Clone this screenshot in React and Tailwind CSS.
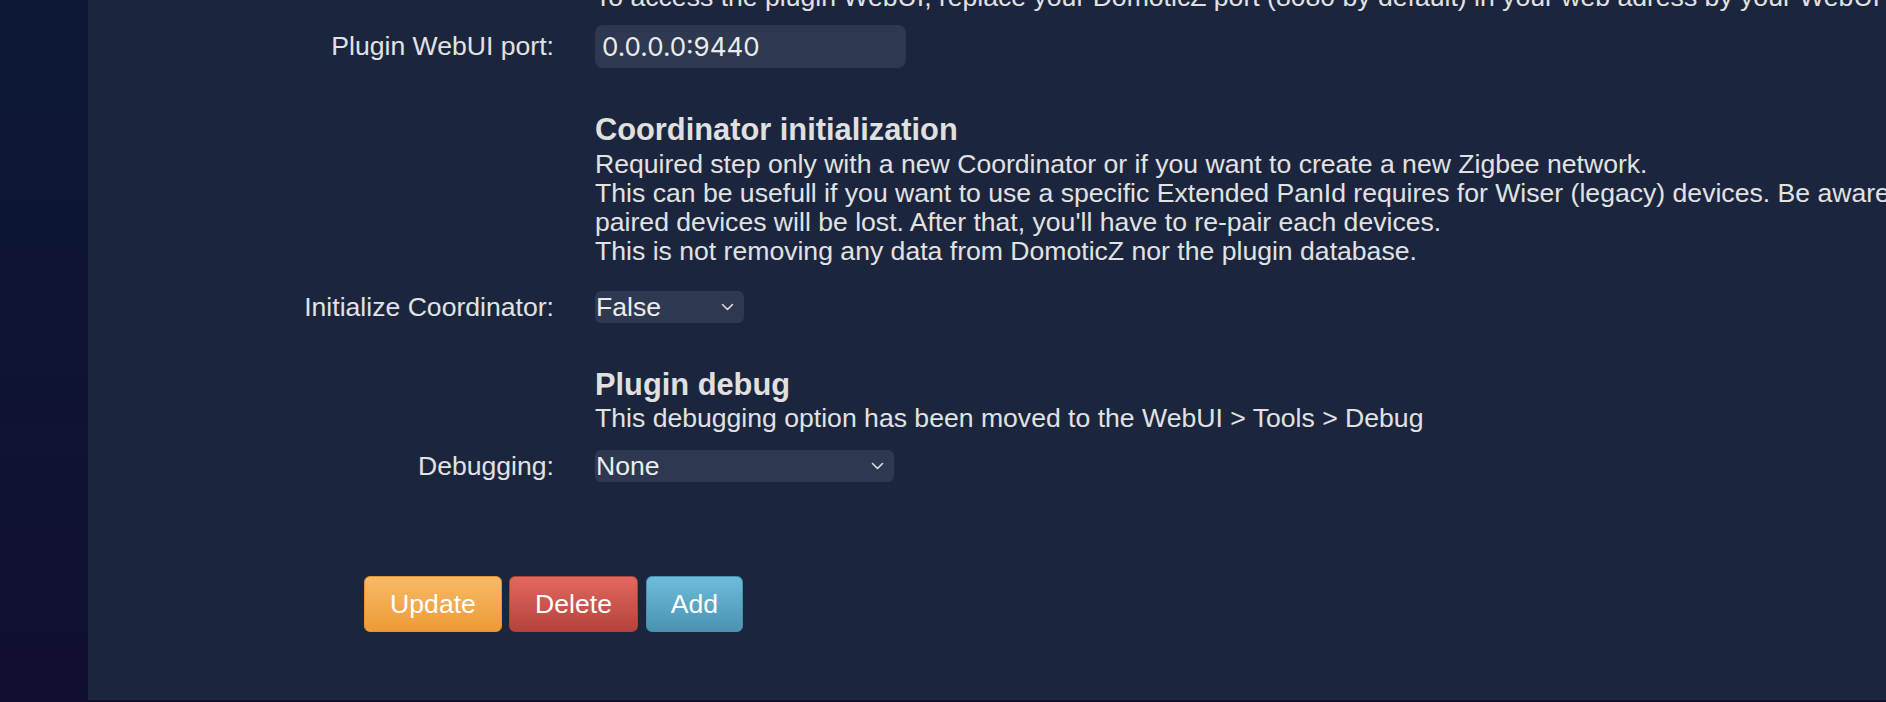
import React from "react";

function Chevron() {
  return (
    <svg width="13" height="8" viewBox="0 0 13 8" fill="none" className="shrink-0">
      <path d="M1.5 1.5 L6.5 6.5 L11.5 1.5" stroke="#dcdcdc" strokeWidth="1.6" strokeLinecap="round" strokeLinejoin="round" />
    </svg>
  );
}

function Row({ label, children, className = "" }) {
  return (
    <div className={"flex items-center " + className}>
      <div className="w-[466px] shrink-0 text-right whitespace-nowrap">{label}</div>
      <div className="ml-[41px] flex-1 min-w-0">{children}</div>
    </div>
  );
}

function Select({ value, width }) {
  return (
    <div
      className={
        "flex h-[32px] items-center justify-between rounded-[6px] bg-[#2e3951] pl-[1px] pr-[10px] text-[#ececec] " +
        width
      }
    >
      <span>{value}</span>
      <Chevron />
    </div>
  );
}

export default function App() {
  return (
    <div className="flex h-[702px] w-[1886px] overflow-hidden bg-gradient-to-b from-[#0b1836] to-[#110f30] font-['Liberation_Sans',Arial,sans-serif] text-[26.6px] leading-[29px] text-[#e2e2e2]">
      <div className="w-[88px] shrink-0" />
      <div className="h-[700px] flex-1 overflow-hidden bg-[#1b263e]">
        <div className="-mt-[17px] flex flex-col">
          <Row label="">
            <div className="whitespace-nowrap">
              To access the plugin WebUI, replace your DomoticZ port (8080 by default) in your web adress by your WebUI port.
            </div>
          </Row>

          <Row label="Plugin WebUI port:" className="mt-[13px]">
            <div className="flex h-[43px] w-[311px] items-center rounded-[8px] bg-[#2e3951] pl-[7px] font-['Inter',sans-serif] text-[26px] text-[#ececec]">
              0.0.0.0:9440
            </div>
          </Row>

          <Row label="" className="mt-[44px] !items-start">
            <div className="whitespace-nowrap">
              <div className="text-[30.8px] font-bold leading-[35px] text-[#e0e0e0]">Coordinator initialization</div>
              <div className="mt-[3px]">
                Required step only with a new Coordinator or if you want to create a new Zigbee network.
                <br />
                This can be usefull if you want to use a specific Extended PanId requires for Wiser (legacy) devices. Be aware that all
                <br />
                paired devices will be lost. After that, you'll have to re-pair each devices.
                <br />
                This is not removing any data from DomoticZ nor the plugin database.
              </div>
            </div>
          </Row>

          <Row label="Initialize Coordinator:" className="mt-[25px]">
            <Select value="False" width="w-[149px]" />
          </Row>

          <Row label="" className="mt-[44px] !items-start">
            <div className="whitespace-nowrap">
              <div className="text-[30.8px] font-bold leading-[35px] text-[#e0e0e0]">Plugin debug</div>
              <div className="mt-[2px]">This debugging option has been moved to the WebUI &gt; Tools &gt; Debug</div>
            </div>
          </Row>

          <Row label="Debugging:" className="mt-[17px]">
            <Select value="None" width="w-[299px]" />
          </Row>

          <div className="mt-[94px] ml-[276px] flex gap-[7px] text-white [text-shadow:0_-1px_0_rgba(0,0,0,0.3)]">
            <button className="h-[56px] w-[138px] rounded-[6px] border border-[#e3962f] bg-gradient-to-b from-[#f7bb65] to-[#ee9a35]">
              Update
            </button>
            <button className="h-[56px] w-[129px] rounded-[6px] border border-[#ad4037] bg-gradient-to-b from-[#e1685f] to-[#b5433a]">
              Delete
            </button>
            <button className="ml-[1px] h-[56px] w-[97px] rounded-[6px] border border-[#4690ad] bg-gradient-to-b from-[#6ebcdc] to-[#4993b0]">
              Add
            </button>
          </div>
        </div>
      </div>
    </div>
  );
}
